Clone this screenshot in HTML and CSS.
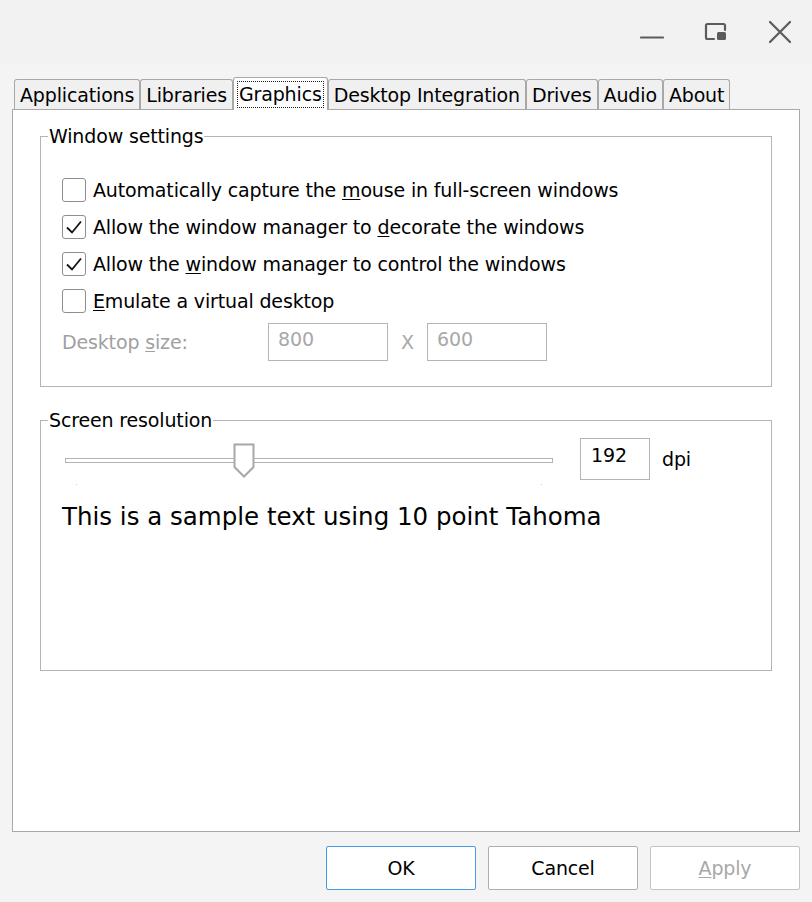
FILE: index.html
```html
<!DOCTYPE html>
<html>
<head>
<meta charset="utf-8">
<link rel="stylesheet" href="styles.css">
</head>
<body>
<div class="titlebar">
  <span class="tb-btn">
    <svg width="24" height="24" viewBox="0 0 24 24"><path d="M1 17.5H23" stroke="#5c5c5c" stroke-width="2.2" stroke-linecap="round"/></svg>
  </span>
  <span class="tb-btn">
    <svg width="24" height="24" viewBox="0 0 24 24"><path d="M10 19H3.5Q2 19 2 17.5V5.5Q2 4 3.5 4H19.5Q21 4 21 5.5V10" fill="none" stroke="#5c5c5c" stroke-width="2.2" stroke-linecap="round"/><rect x="13" y="12" width="9" height="8" rx="1.5" fill="#5c5c5c"/></svg>
  </span>
  <span class="tb-btn">
    <svg width="24" height="24" viewBox="0 0 24 24"><path d="M2 2L22 22M22 2L2 22" stroke="#5c5c5c" stroke-width="2.2" stroke-linecap="round"/></svg>
  </span>
</div>
<div class="main">
  <div class="tabs">
    <div class="tab">Applications</div>
    <div class="tab">Libraries</div>
    <div class="tab active"><span class="focus">Graphics</span></div>
    <div class="tab">Desktop Integration</div>
    <div class="tab">Drives</div>
    <div class="tab">Audio</div>
    <div class="tab">About</div>
  </div>
  <div class="panel">
    <fieldset class="group group-window">
      <legend>Window settings</legend>
      <div class="row"><span class="cb"></span><span>Automatically capture the <u>m</u>ouse in full-screen windows</span></div>
      <div class="row"><span class="cb"><svg width="22" height="22" viewBox="0 0 22 22"><path d="M4 11.5L9 16.5L18 5.5" fill="none" stroke="#111" stroke-width="1.8"/></svg></span><span>Allow the window manager to <u>d</u>ecorate the windows</span></div>
      <div class="row"><span class="cb"><svg width="22" height="22" viewBox="0 0 22 22"><path d="M4 11.5L9 16.5L18 5.5" fill="none" stroke="#111" stroke-width="1.8"/></svg></span><span>Allow the <u>w</u>indow manager to control the windows</span></div>
      <div class="row"><span class="cb"></span><span><u>E</u>mulate a virtual desktop</span></div>
      <div class="row size-row">
        <span class="size-label">Desktop <u>s</u>ize:</span>
        <span class="field disabled">800</span>
        <span class="x">X</span>
        <span class="field disabled">600</span>
      </div>
    </fieldset>
    <fieldset class="group group-res">
      <legend>Screen resolution</legend>
      <div class="slider-row">
        <div class="slider">
          <div class="track"></div>
          <svg class="handle" width="22" height="36" viewBox="0 0 22 36"><path d="M1.5 1.5H20.5V24L11 33.5L1.5 24Z" fill="#fff" stroke="#a8a8a8" stroke-width="2"/></svg>
          <span class="tick tick-l"></span>
          <span class="tick tick-r"></span>
        </div>
        <span class="field dpi-field">192</span>
        <span class="dpi">dpi</span>
      </div>
      <div class="sample">This is a sample text using 10 point Tahoma</div>
    </fieldset>
  </div>
  <div class="buttons">
    <button class="btn default">OK</button>
    <button class="btn">Cancel</button>
    <button class="btn disabled"><u>A</u>pply</button>
  </div>
</div>
</body>
</html>
```
FILE: styles.css
```css
html, body {
  margin: 0;
  padding: 0;
}
body {
  width: 812px;
  height: 902px;
  background: #f4f4f4;
  font-family: "DejaVu Sans", sans-serif;
  font-size: 19px;
  letter-spacing: -0.15px;
  color: #000;
  overflow: hidden;
}
u {
  text-decoration: underline;
  text-underline-offset: 2px;
}
.titlebar {
  height: 63px;
  background: #f2f2f2;
  display: flex;
  justify-content: flex-end;
  align-items: flex-start;
  padding-right: 20px;
  gap: 40px;
}
.tb-btn {
  display: flex;
  margin-top: 20px;
}
.main {
  padding: 0 12px;
}
.tabs {
  display: flex;
  align-items: flex-end;
  height: 47px;
  padding-left: 2px;
  position: relative;
  z-index: 1;
}
.tab {
  height: 29px;
  line-height: 30px;
  padding: 0 5px;
  border: 1px solid #a8a8a8;
  border-bottom: none;
  border-radius: 3px 3px 0 0;
  background: #f0f0f0;
  margin-bottom: 1px;
  white-space: nowrap;
}
.tab.active {
  background: #fff;
  height: 32px;
  margin-bottom: 0;
  line-height: 32px;
  padding: 0 4px;
}
.focus {
  outline: 1px dotted #222;
  outline-offset: 0;
  padding: 0 1px;
  display: inline-block;
  line-height: 25px;
}
.panel {
  height: 721px;
  background: #fff;
  border: 1px solid #a8a8a8;
  padding: 0 27px;
  position: relative;
  top: -1px;
}
.group {
  margin: 15px 0 0;
  border: 1px solid #b4b4b4;
  padding: 0 20px 0 21px;
}
.group legend {
  padding: 0 1px;
  margin-left: -14px;
  line-height: 22px;
}
.group-window {
  padding-top: 24px;
  padding-bottom: 21px;
}
.row {
  display: flex;
  align-items: center;
  height: 37px;
  gap: 7px;
  white-space: nowrap;
}
.row.size-row { height: 46px; }
.cb {
  width: 22px;
  height: 22px;
  border: 1px solid #8e8e8e;
  border-radius: 3px;
  display: flex;
  background: #fff;
}
.size-row {
  gap: 0;
}
.size-label {
  color: #a0a0a0;
  width: 206px;
}
.field {
  box-sizing: border-box;
  border: 1px solid #b4b4b4;
  height: 38px;
  padding: 4px 9px;
  line-height: 22px;
}
.field.disabled {
  width: 120px;
  color: #a8a8a8;
}
.x {
  color: #a8a8a8;
  width: 39px;
  text-align: center;
}
.group-res {
  margin-top: 22px;
  height: 253px;
  padding-top: 7px;
}
.slider-row {
  display: flex;
  align-items: flex-start;
}
.slider {
  position: relative;
  width: 488px;
  height: 48px;
  margin-left: 3px;
  margin-right: 27px;
}
.track {
  margin-top: 20px;
  height: 3px;
  border: 1px solid #b4b4b4;
  background: #fff;
}
.handle {
  position: absolute;
  left: 168px;
  top: 5px;
}
.tick {
  position: absolute;
  top: 46px;
  width: 1px;
  height: 1px;
  background: #c8c8c8;
}
.tick-l { left: 11px; }
.tick-r { left: 476px; }
.dpi-field {
  width: 70px;
  height: 42px;
  padding: 5px 10px;
}
.dpi {
  margin-left: 12px;
  line-height: 42px;
}
.sample {
  font-size: 24.5px;
  letter-spacing: 0;
  margin-top: 16px;
}
.buttons {
  display: flex;
  justify-content: flex-end;
  gap: 12px;
  margin-top: 13px;
}
.btn {
  width: 150px;
  height: 44px;
  background: #fff;
  border: 1px solid #b0b0b0;
  border-radius: 2px;
  font-family: "DejaVu Sans", sans-serif;
  font-size: 19px;
  letter-spacing: -0.15px;
  color: #000;
  padding: 0;
}
.btn.default {
  border-color: #4a9be6;
}
.btn.disabled {
  color: #a8a8a8;
  border-color: #c4c4c4;
}
```
